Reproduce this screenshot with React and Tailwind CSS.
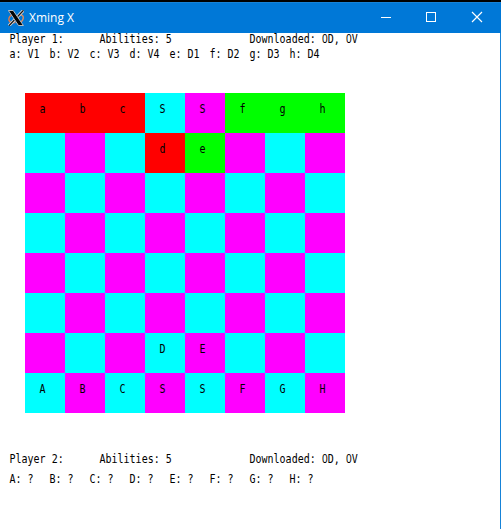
const BOARD = [
  'abcSSfgh',
  '   de   ',
  '        ',
  '        ',
  '        ',
  '        ',
  '   DE   ',
  'ABCSSFGH',
];

function cellColor(ch, row, col) {
  if ('abcd'.includes(ch)) return 'bg-[#ff0000]';
  if ('efgh'.includes(ch)) return 'bg-[#00ff00]';
  return (row + col) % 2 ? 'bg-[#00ffff]' : 'bg-[#ff00ff]';
}

function Mono({ children }) {
  return (
    <span className="block h-[13px] origin-[0_11px] scale-y-[1.22] whitespace-pre font-['DejaVu_Sans_Mono',monospace] text-[10px] leading-[14px] text-black">
      {children}
    </span>
  );
}

// Zero without the inner dot, kept to one monospace column.
function Zero() {
  return <span className="inline-block w-[6px] text-center font-['Noto_Sans',sans-serif] leading-none">0</span>;
}

function Stats({ player }) {
  return (
    <div className="flex h-[13px] pl-[9.5px]">
      <div className="w-[90px]"><Mono>{`Player ${player}:`}</Mono></div>
      <div className="w-[150px]"><Mono>Abilities: 5</Mono></div>
      <Mono>Downloaded: <Zero />D, <Zero />V</Mono>
    </div>
  );
}

function Links({ items }) {
  return (
    <div className="flex h-[13px] pl-[9.5px]">
      {items.map((item) => (
        <div key={item} className="w-10"><Mono>{item}</Mono></div>
      ))}
    </div>
  );
}

function XLogo() {
  return (
    <svg width="16" height="16" viewBox="0 0 16 16">
      <path d="M5.5 4.2C2 5.2.4 8 1 10.2s3.3 3 6.4 2.2" fill="none" stroke="#e07848" strokeWidth="1.4" />
      <path d="M11.3 4.5c3 0 4.5 1.8 3.8 4.2-.6 2.2-3 4.3-6.1 4.4" fill="none" stroke="#d98c62" strokeWidth="1.4" />
      <path d="M15.5.3 1 15.7" stroke="#d0d4d8" strokeWidth="3" />
      <path d="M15.5.3 1 15.7" stroke="#111" strokeWidth="1.2" />
      <path d="M.4.5h4.8l10.2 15h-4.9z" fill="#050505" stroke="#c4c9cf" strokeWidth=".9" />
    </svg>
  );
}

export default function App() {
  return (
    <div className="flex h-[529px] w-[501px] flex-col overflow-hidden bg-white">
      <header className="flex h-[33px] shrink-0 items-center border-t-2 border-black bg-[#0078d7] pl-2 shadow-[inset_0_1px_0_#1683d8]">
        <XLogo />
        <span className="ml-[5px] flex-1 font-['Open_Sans','Noto_Sans',sans-serif] text-[12px] leading-4 text-white">Xming X</span>
        <svg width="138" height="31" viewBox="0 0 138 31" fill="none" stroke="white">
          <path d="M18 15.5h10" shapeRendering="crispEdges" />
          <path d="M63.5 10.5h9v9h-9z" shapeRendering="crispEdges" />
          <path d="m109 10 10 10M119 10l-10 10" strokeWidth="1.15" />
        </svg>
      </header>
      <main className="flex-1 border-r border-[#1683d8]">
        <Stats player={1} />
        <div className="mt-[2px]">
          <Links items={['a: V1', 'b: V2', 'c: V3', 'd: V4', 'e: D1', 'f: D2', 'g: D3', 'h: D4']} />
        </div>
        <div className="mt-8 ml-[25px] grid w-80 grid-cols-8">
          {BOARD.flatMap((line, row) =>
            [...line].map((ch, col) => (
              <div key={`${row}-${col}`} className={`h-10 pt-[10px] pl-[14.5px] ${cellColor(ch, row, col)}`}>
                {ch !== ' ' && <Mono>{ch}</Mono>}
              </div>
            ))
          )}
        </div>
        <div className="mt-10">
          <Stats player={2} />
          <div className="mt-[7px]">
            <Links items={['A: ?', 'B: ?', 'C: ?', 'D: ?', 'E: ?', 'F: ?', 'G: ?', 'H: ?']} />
          </div>
        </div>
      </main>
    </div>
  );
}
